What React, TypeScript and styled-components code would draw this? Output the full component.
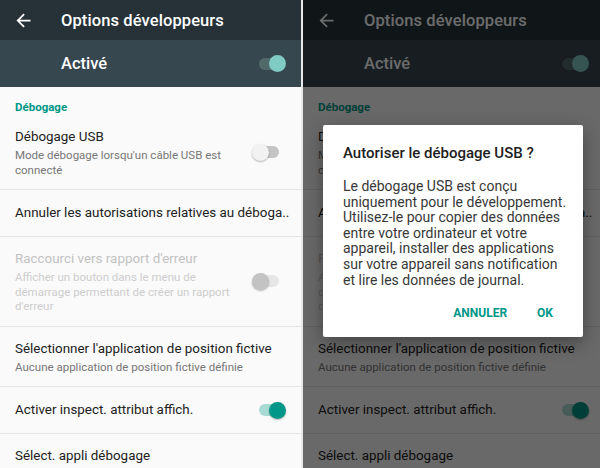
import React from "react";
import styled, { createGlobalStyle } from "styled-components";

const GlobalStyle = createGlobalStyle`
  body {
    margin: 0;
    background: #ffffff;
    font-family: Roboto, "Liberation Sans", sans-serif;
  }
`;

// Two phone screenshots side by side
const Screens = styled.div`
  display: flex;
  gap: 2px;
  width: 600px;
  height: 468px;
  overflow: hidden;
  background: #e9e9e9;
`;

const Phone = styled.div`
  position: relative;
  flex: 0 0 301px;
  height: 468px;
  overflow: hidden;
  background: #fafafa;
  display: flex;
  flex-direction: column;
`;

const Toolbar = styled.div`
  display: flex;
  align-items: center;
  height: 40px;
  flex: 0 0 40px;
  background: #263238;
  color: #ffffff;
`;

const BackButton = styled.div`
  display: flex;
  align-items: center;
  justify-content: center;
  width: 61px;
  height: 40px;
  padding-right: 14px;
  box-sizing: border-box;
`;

const ToolbarTitle = styled.div`
  font-size: 16.5px;
  font-weight: 500;
  letter-spacing: 0.1px;
`;

const MasterBar = styled.div`
  display: flex;
  align-items: center;
  height: 47px;
  flex: 0 0 47px;
  padding-left: 61px;
  background: #37474f;
  color: #ffffff;
  font-size: 16.5px;
  font-weight: 500;
`;

const MasterLabel = styled.div`
  flex: 1;
`;

const SectionHeader = styled.div`
  height: 28px;
  flex: 0 0 28px;
  box-sizing: border-box;
  padding: 13px 0 0 15px;
  font-size: 11.5px;
  line-height: 14px;
  font-weight: 700;
  color: #009688;
`;

const Item = styled.div<{ $single?: boolean }>`
  display: flex;
  align-items: center;
  flex: 0 0 auto;
  padding: ${(p) => (p.$single ? "13px" : "12px")} 0
    ${(p) => (p.$single ? "13px" : "12px")} 15px;
  border-bottom: 1px solid #e5e5e5;
`;

const ItemText = styled.div`
  flex: 1;
  min-width: 0;
  padding-right: 16px;
`;

const ItemTitle = styled.div<{ $disabled?: boolean }>`
  font-size: 13.4px;
  line-height: 20px;
  color: ${(p) => (p.$disabled ? "#c2c2c2" : "#212121")};
  white-space: nowrap;
`;

const ItemSummary = styled.div<{ $disabled?: boolean }>`
  margin-top: 1px;
  font-size: 11.5px;
  line-height: 14.5px;
  color: ${(p) => (p.$disabled ? "#cdcdcd" : "#777777")};
`;

type SwitchKind = "master" | "on" | "off" | "disabled";

const switchColors: Record<SwitchKind, { track: string; thumb: string }> = {
  master: { track: "#51696a", thumb: "#80cbc4" },
  on: { track: "#a9dbd5", thumb: "#009688" },
  off: { track: "#c4c4c4", thumb: "#f2f2f2" },
  disabled: { track: "#e6e6e6", thumb: "#c3c3c3" },
};

const SwitchBox = styled.div`
  position: relative;
  flex: 0 0 34px;
  height: 17px;
  margin-right: 15px;
`;

const SwitchTrack = styled.span<{ $kind: SwitchKind }>`
  position: absolute;
  top: 2.5px;
  left: ${(p) => (p.$kind === "master" || p.$kind === "on" ? "7px" : "1px")};
  width: 26px;
  height: 12px;
  border-radius: 6px;
  background: ${(p) => switchColors[p.$kind].track};
`;

const SwitchThumb = styled.span<{ $kind: SwitchKind }>`
  position: absolute;
  top: 0;
  left: ${(p) => (p.$kind === "master" || p.$kind === "on" ? "17px" : "0")};
  width: 17px;
  height: 17px;
  border-radius: 50%;
  background: ${(p) => switchColors[p.$kind].thumb};
  box-shadow: ${(p) =>
    p.$kind === "master" ? "none" : "0 1px 2px rgba(0, 0, 0, 0.28)"};
`;

const Switch = ({ kind }: { kind: SwitchKind }) => (
  <SwitchBox>
    <SwitchTrack $kind={kind} />
    <SwitchThumb $kind={kind} />
  </SwitchBox>
);

// Dim layer and dialog on the right screen
const Scrim = styled.div`
  position: absolute;
  inset: 0;
  background: rgba(0, 0, 0, 0.58);
`;

const Dialog = styled.div`
  position: absolute;
  left: 20px;
  top: 125px;
  width: 260px;
  height: 212px;
  box-sizing: border-box;
  padding: 18px 0 0 20px;
  background: #ffffff;
  border-radius: 2px;
  box-shadow: 0 6px 18px rgba(0, 0, 0, 0.35);
  display: flex;
  flex-direction: column;
`;

const DialogTitle = styled.div`
  font-size: 15px;
  line-height: 20px;
  font-weight: 500;
  color: #212121;
`;

const DialogBody = styled.div`
  margin-top: 16px;
  font-size: 14px;
  line-height: 15.6px;
  color: #383838;
  white-space: pre;
`;

const DialogActions = styled.div`
  display: flex;
  justify-content: flex-end;
  gap: 30px;
  margin-top: 17px;
  padding-right: 30px;
`;

const DialogButton = styled.span`
  font-size: 12px;
  line-height: 16px;
  font-weight: 700;
  color: #009688;
`;

const BackArrow = () => (
  <svg width="21" height="21" viewBox="0 0 24 24" fill="#ffffff">
    <path d="M20 11H7.83l5.59-5.59L12 4l-8 8 8 8 1.41-1.41L7.83 13H20v-2z" />
  </svg>
);

const DevOptions = ({ children }: { children?: React.ReactNode }) => (
  <Phone>
    <Toolbar>
      <BackButton>
        <BackArrow />
      </BackButton>
      <ToolbarTitle>Options développeurs</ToolbarTitle>
    </Toolbar>
    <MasterBar>
      <MasterLabel>Activé</MasterLabel>
      <Switch kind="master" />
    </MasterBar>
    <SectionHeader>Débogage</SectionHeader>
    <Item>
      <ItemText>
        <ItemTitle>Débogage USB</ItemTitle>
        <ItemSummary>Mode débogage lorsqu'un câble USB est connecté</ItemSummary>
      </ItemText>
      <Switch kind="off" />
    </Item>
    <Item $single>
      <ItemText>
        <ItemTitle>Annuler les autorisations relatives au déboga..</ItemTitle>
      </ItemText>
    </Item>
    <Item>
      <ItemText>
        <ItemTitle $disabled>Raccourci vers rapport d'erreur</ItemTitle>
        <ItemSummary $disabled>
          Afficher un bouton dans le menu de démarrage permettant de créer un
          rapport d'erreur
        </ItemSummary>
      </ItemText>
      <Switch kind="disabled" />
    </Item>
    <Item>
      <ItemText>
        <ItemTitle>Sélectionner l'application de position fictive</ItemTitle>
        <ItemSummary>Aucune application de position fictive définie</ItemSummary>
      </ItemText>
    </Item>
    <Item $single>
      <ItemText>
        <ItemTitle>Activer inspect. attribut affich.</ItemTitle>
      </ItemText>
      <Switch kind="on" />
    </Item>
    <Item>
      <ItemText>
        <ItemTitle>Sélect. appli débogage</ItemTitle>
        <ItemSummary>Aucune application de débogage définie</ItemSummary>
      </ItemText>
    </Item>
    {children}
  </Phone>
);

const dialogMessage = [
  "Le débogage USB est conçu",
  "uniquement pour le développement.",
  "Utilisez-le pour copier des données",
  "entre votre ordinateur et votre",
  "appareil, installer des applications",
  "sur votre appareil sans notification",
  "et lire les données de journal.",
].join("\n");

export default function App() {
  return (
    <>
      <GlobalStyle />
      <Screens>
        <DevOptions />
        <DevOptions>
          <Scrim />
          <Dialog>
            <DialogTitle>Autoriser le débogage USB ?</DialogTitle>
            <DialogBody>{dialogMessage}</DialogBody>
            <DialogActions>
              <DialogButton>ANNULER</DialogButton>
              <DialogButton>OK</DialogButton>
            </DialogActions>
          </Dialog>
        </DevOptions>
      </Screens>
    </>
  );
}
